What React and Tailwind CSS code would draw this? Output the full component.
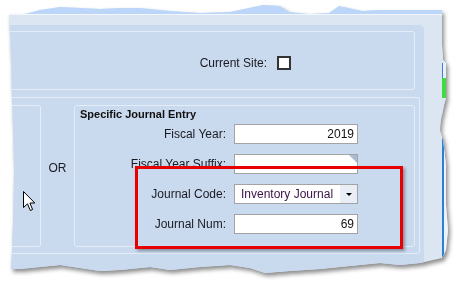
import React from 'react';

const Cursor = () => (
  <svg width="13" height="21" viewBox="0 0 13 21" className="absolute left-[14px] top-[186px]">
    <path d="M0.5 0.5 L0.5 16.5 L4.5 12.8 L7.3 19.5 L9.6 18.5 L6.9 12 L11.8 12 Z" fill="#fff" stroke="#000" strokeWidth="1" strokeLinejoin="miter" />
  </svg>
);

const Field = ({ value, corner }) => (
  <div className="relative h-[20px] w-[124px] border border-[#a3a3a3] bg-white text-right pr-[3px] leading-[18px] text-[#111]">
    {value}
    {corner && (
      <span className="absolute right-0 top-0 h-[8px] w-[8px] bg-[#a9bcd6] [clip-path:polygon(0_0,100%_0,100%_100%)]" />
    )}
  </div>
);

const App = () => {
  return (
    <div className="min-h-screen bg-white pl-[9px] pt-[5px] font-['Liberation_Sans',Arial,sans-serif] text-[12px] text-[#1a1a22]">
      <div className="w-[440px] h-[268px] drop-shadow-[2px_3px_2px_rgba(0,0,0,0.45)]">
        <div className="relative flex h-full w-full flex-col overflow-hidden bg-[#dce6f3] [clip-path:polygon(0px_9px,16px_9px,31px_5px,51px_2px,71px_3px,91px_4px,111px_3px,131px_3px,161px_6px,191px_8px,221px_7px,254px_0px,271px_1px,280px_7px,300px_9px,320px_8px,330px_1px,353px_6px,370px_5px,400px_5px,433px_5px,433px_40px,434px_55px,437px_58px,437px_93px,435px_100px,432px_115px,431px_125px,434px_135px,437px_160px,437px_200px,439px_225px,437px_245px,433px_253px,411px_258px,391px_260px,371px_258px,341px_261px,311px_264px,281px_266px,256px_268px,241px_263px,221px_260px,191px_262px,161px_265px,141px_262px,111px_265px,91px_266px,71px_263px,51px_260px,31px_262px,11px_264px,2px_264px,3px_245px,4px_215px,5px_165px,4px_125px,3px_95px,2px_55px)]">
          {/* title strip */}
          <div className="h-[9px] shrink-0 bg-[#bcd6fa]" />
          <div className="h-px shrink-0 bg-[#f3f6fb]" />
          <div className="h-[10px] shrink-0" />

          <div className="flex flex-1">
            {/* main content column */}
            <div className="w-[415px] rounded-tr-[5px] bg-[#c9d9ee] pt-[6px]">
              {/* Current site box */}
              <div className="flex h-[59px] w-[406px] items-center justify-end gap-[10px] rounded-r-[3px] border-y border-r border-[#e4ecf7] pr-[123px] pt-[5px]">
                <span>Current Site:</span>
                <span className="h-[14px] w-[14px] border-2 border-[#333] bg-white" />
              </div>

              {/* Journal selection area */}
              <div className="mt-[7px] flex h-[157px] w-[411px] rounded-r-[3px] border-y border-r border-[#e4ecf7] pt-[7px]">
                <div className="h-[142px] w-[32px] rounded-r-[3px] border-y border-r border-[#e4ecf7]" />
                <div className="w-[33px] pt-[56px] text-center leading-[14px]">OR</div>
                <div className="h-[142px] w-[341px] rounded-[3px] border border-[#e4ecf7] pl-[5px] pt-[2px]">
                  <div className="text-[11px] font-bold leading-[13px] text-[#111]">Specific Journal Entry</div>
                  <div className="mt-[3px] grid grid-cols-[146px_124px] items-center gap-x-[8px] gap-y-[10px] leading-[20px]">
                    <span className="text-right">Fiscal Year:</span>
                    <Field value="2019" />
                    <span className="text-right">Fiscal Year Suffix:</span>
                    <Field value="" corner />
                    <span className="text-right">Journal Code:</span>
                    <div className="flex h-[20px] w-[124px] border border-[#a3a3a3] bg-white">
                      <span className="flex-1 pl-[6px] leading-[18px] text-[#3a1248]">Inventory Journal</span>
                      <span className="flex w-[17px] items-center justify-center bg-[#e9eef6]">
                        <span className="h-0 w-0 border-x-[3px] border-t-[3px] border-x-transparent border-t-black" />
                      </span>
                    </div>
                    <span className="text-right">Journal Num:</span>
                    <Field value="69" />
                  </div>
                </div>
              </div>
            </div>

            {/* light right margin */}
            <div className="w-[18px]" />

            {/* edge of window behind */}
            <div className="flex w-[7px] flex-col">
              <div className="h-[38px] bg-[#dce6f3]" />
              <div className="h-[15px] border-l border-[#3b82d6] bg-[#e8f1fc]" />
              <div className="h-[20px] bg-[#3fdc3f]" />
              <div className="h-[40px] bg-[#dce6f3]" />
              <div className="flex-1 border-l-2 border-[#2c7fd6] bg-[#eef3fa]" />
            </div>
          </div>

          {/* highlight rectangle */}
          <div className="absolute left-[126px] top-[161px] h-[83px] w-[268px] border-[3px] border-[#e80000] shadow-[2px_2px_3px_rgba(0,0,0,0.35)]" />

          <Cursor />
        </div>
      </div>
    </div>
  );
};

export default App;
